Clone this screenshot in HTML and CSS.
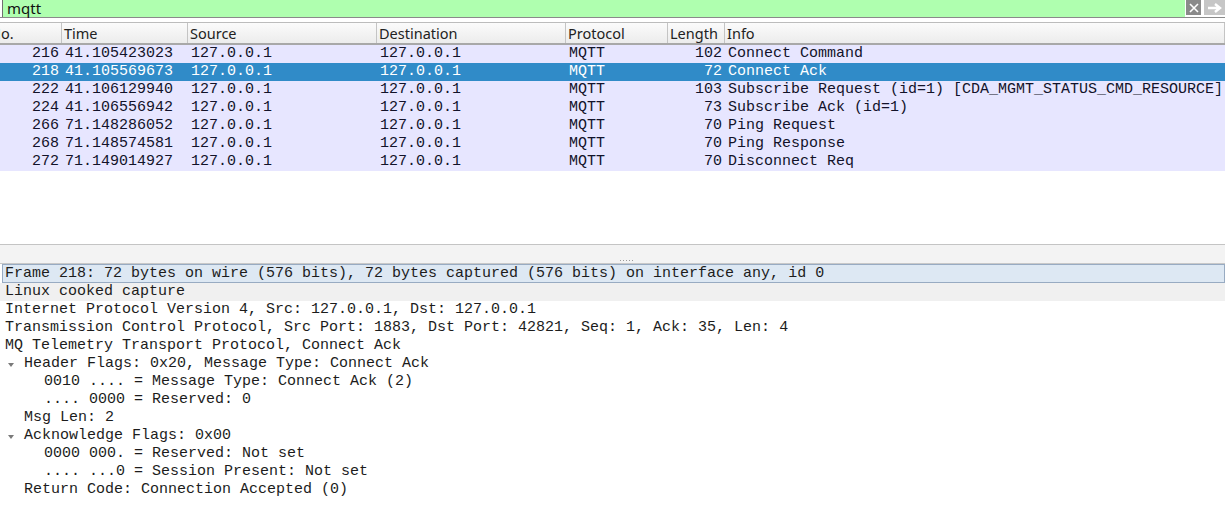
FILE: index.html
```html
<!DOCTYPE html>
<html>
<head>
<meta charset="utf-8">
<link rel="stylesheet" href="styles.css">
</head>
<body>
<div class="filter">
  <div class="filter-input">mqtt</div>
  <div class="btn-clear"><svg width="14" height="14" viewBox="0 0 14 14"><path d="M3 3 L11 11 M11 3 L3 11" stroke="#fff" stroke-width="1.6"/></svg></div>
  <div class="btn-apply"><svg width="20" height="14" viewBox="0 0 20 14"><path d="M3 7 H13 M10 3 L15 7 L10 11" stroke="#fff" stroke-width="2.4" fill="none"/></svg></div>
</div>
<div class="list">
  <div class="list-inner">
    <div class="hdr">
      <div class="c no">No.</div>
      <div class="c tm">Time</div>
      <div class="c src">Source</div>
      <div class="c dst">Destination</div>
      <div class="c pr">Protocol</div>
      <div class="c ln">Length</div>
      <div class="c inf">Info</div>
    </div>
    <div class="row"><div class="c no r">216</div><div class="c tm">41.105423023</div><div class="c src">127.0.0.1</div><div class="c dst">127.0.0.1</div><div class="c pr">MQTT</div><div class="c ln r">102</div><div class="c inf">Connect Command</div></div>
    <div class="row sel"><div class="c no r">218</div><div class="c tm">41.105569673</div><div class="c src">127.0.0.1</div><div class="c dst">127.0.0.1</div><div class="c pr">MQTT</div><div class="c ln r">72</div><div class="c inf">Connect Ack</div></div>
    <div class="row"><div class="c no r">222</div><div class="c tm">41.106129940</div><div class="c src">127.0.0.1</div><div class="c dst">127.0.0.1</div><div class="c pr">MQTT</div><div class="c ln r">103</div><div class="c inf">Subscribe Request (id=1) [CDA_MGMT_STATUS_CMD_RESOURCE]</div></div>
    <div class="row"><div class="c no r">224</div><div class="c tm">41.106556942</div><div class="c src">127.0.0.1</div><div class="c dst">127.0.0.1</div><div class="c pr">MQTT</div><div class="c ln r">73</div><div class="c inf">Subscribe Ack (id=1)</div></div>
    <div class="row"><div class="c no r">266</div><div class="c tm">71.148286052</div><div class="c src">127.0.0.1</div><div class="c dst">127.0.0.1</div><div class="c pr">MQTT</div><div class="c ln r">70</div><div class="c inf">Ping Request</div></div>
    <div class="row"><div class="c no r">268</div><div class="c tm">71.148574581</div><div class="c src">127.0.0.1</div><div class="c dst">127.0.0.1</div><div class="c pr">MQTT</div><div class="c ln r">70</div><div class="c inf">Ping Response</div></div>
    <div class="row"><div class="c no r">272</div><div class="c tm">71.149014927</div><div class="c src">127.0.0.1</div><div class="c dst">127.0.0.1</div><div class="c pr">MQTT</div><div class="c ln r">70</div><div class="c inf">Disconnect Req</div></div>
  </div>
</div>
<div class="splitter"><div class="grip"></div></div>
<div class="tree">
  <div class="t t0 tsel">Frame 218: 72 bytes on wire (576 bits), 72 bytes captured (576 bits) on interface any, id 0</div>
  <div class="t t0 hover">Linux cooked capture</div>
  <div class="t t0">Internet Protocol Version 4, Src: 127.0.0.1, Dst: 127.0.0.1</div>
  <div class="t t0">Transmission Control Protocol, Src Port: 1883, Dst Port: 42821, Seq: 1, Ack: 35, Len: 4</div>
  <div class="t t0">MQ Telemetry Transport Protocol, Connect Ack</div>
  <div class="t t1 open">Header Flags: 0x20, Message Type: Connect Ack</div>
  <div class="t t2">0010 .... = Message Type: Connect Ack (2)</div>
  <div class="t t2">.... 0000 = Reserved: 0</div>
  <div class="t t1">Msg Len: 2</div>
  <div class="t t1 open">Acknowledge Flags: 0x00</div>
  <div class="t t2">0000 000. = Reserved: Not set</div>
  <div class="t t2">.... ...0 = Session Present: Not set</div>
  <div class="t t1">Return Code: Connection Accepted (0)</div>
</div>
</body>
</html>
```
FILE: styles.css
```css
html, body {
  margin: 0;
  padding: 0;
  background: #ffffff;
  overflow: hidden;
}
body {
  width: 1225px;
  height: 520px;
  font-family: "Liberation Mono", monospace;
  font-size: 15px;
  color: #1a1a1a;
}
.filter {
  display: flex;
  height: 17px;
  border-bottom: 1px solid #8a8a8a;
  padding-left: 2px;
}
.filter-input {
  flex: 1;
  background: #afffaf;
  border-left: 1px solid #6f6f6f;
  font-family: "Noto Sans", sans-serif;
  font-size: 15px;
  line-height: 17px;
  padding-left: 4px;
  color: #111;
}
.btn-clear {
  width: 15px;
  height: 15px;
  background: #8a8a8a;
  margin-left: 1px;
  display: flex;
  align-items: center;
  justify-content: center;
}
.btn-apply {
  width: 21px;
  height: 15px;
  background: #c6c6c6;
  margin-left: 3px;
  display: flex;
  align-items: center;
  justify-content: center;
}
.list {
  margin-top: 4px;
  height: 221px;
  border-top: 1px solid #bcbcbc;
  border-bottom: 1px solid #c4c4c4;
  overflow: hidden;
}
.list-inner {
  margin-left: -13px;
}
.hdr {
  display: flex;
  height: 20px;
  background: linear-gradient(#fbfbfb, #ececec);
  border-bottom: 2px solid #a8a8a8;
  font-family: "Noto Sans", sans-serif;
  font-size: 14.5px;
  line-height: 21px;
  color: #222;
}
.hdr .c {
  border-right: 1px solid #c4c4c4;
  padding-left: 2px;
}
.c {
  flex: none;
  box-sizing: border-box;
  white-space: nowrap;
  overflow: hidden;
  padding: 0 3px;
}
.no { width: 75px; }
.tm { width: 126px; }
.src { width: 189px; }
.dst { width: 189px; }
.pr { width: 102px; }
.ln { width: 57px; }
.inf { flex: 1; }
.hdr .no { padding-left: 3px; }
.r { text-align: right; }
.row {
  display: flex;
  height: 18px;
  line-height: 18px;
  background: #e7e6ff;
  color: #12122a;
}
.row.sel {
  background: #308bc8;
  color: #ffffff;
}
.splitter {
  height: 19px;
  background: #f3f3f3;
  border-bottom: 1px solid #c8c8c8;
  display: flex;
  justify-content: center;
  align-items: flex-end;
  box-sizing: border-box;
}
.grip {
  width: 14px;
  height: 1px;
  margin-left: 28px;
  margin-bottom: 2px;
  background: repeating-linear-gradient(90deg, #9a9a9a 0 1px, transparent 1px 3px);
}
.tree {
  background: #ffffff;
}
.t {
  height: 18px;
  line-height: 18px;
  white-space: nowrap;
  position: relative;
  color: #1c1c1c;
}
.t0 { padding-left: 5px; margin-left: 0; }
.t1 { padding-left: 24px; }
.t2 { padding-left: 44px; }
.tsel {
  margin-left: 2px;
  padding-left: 2px;
  background: #dde8f3;
  border: 1px solid #98abc2;
  height: 16px;
  line-height: 16px;
  padding-top: 1px;
  padding-bottom: 0;
}
.hover {
  background: #f0f0f0;
}
.open::before {
  content: "";
  position: absolute;
  left: 8px;
  top: 8px;
  border-left: 3.5px solid transparent;
  border-right: 3.5px solid transparent;
  border-top: 4px solid #7a7a7a;
}
```
